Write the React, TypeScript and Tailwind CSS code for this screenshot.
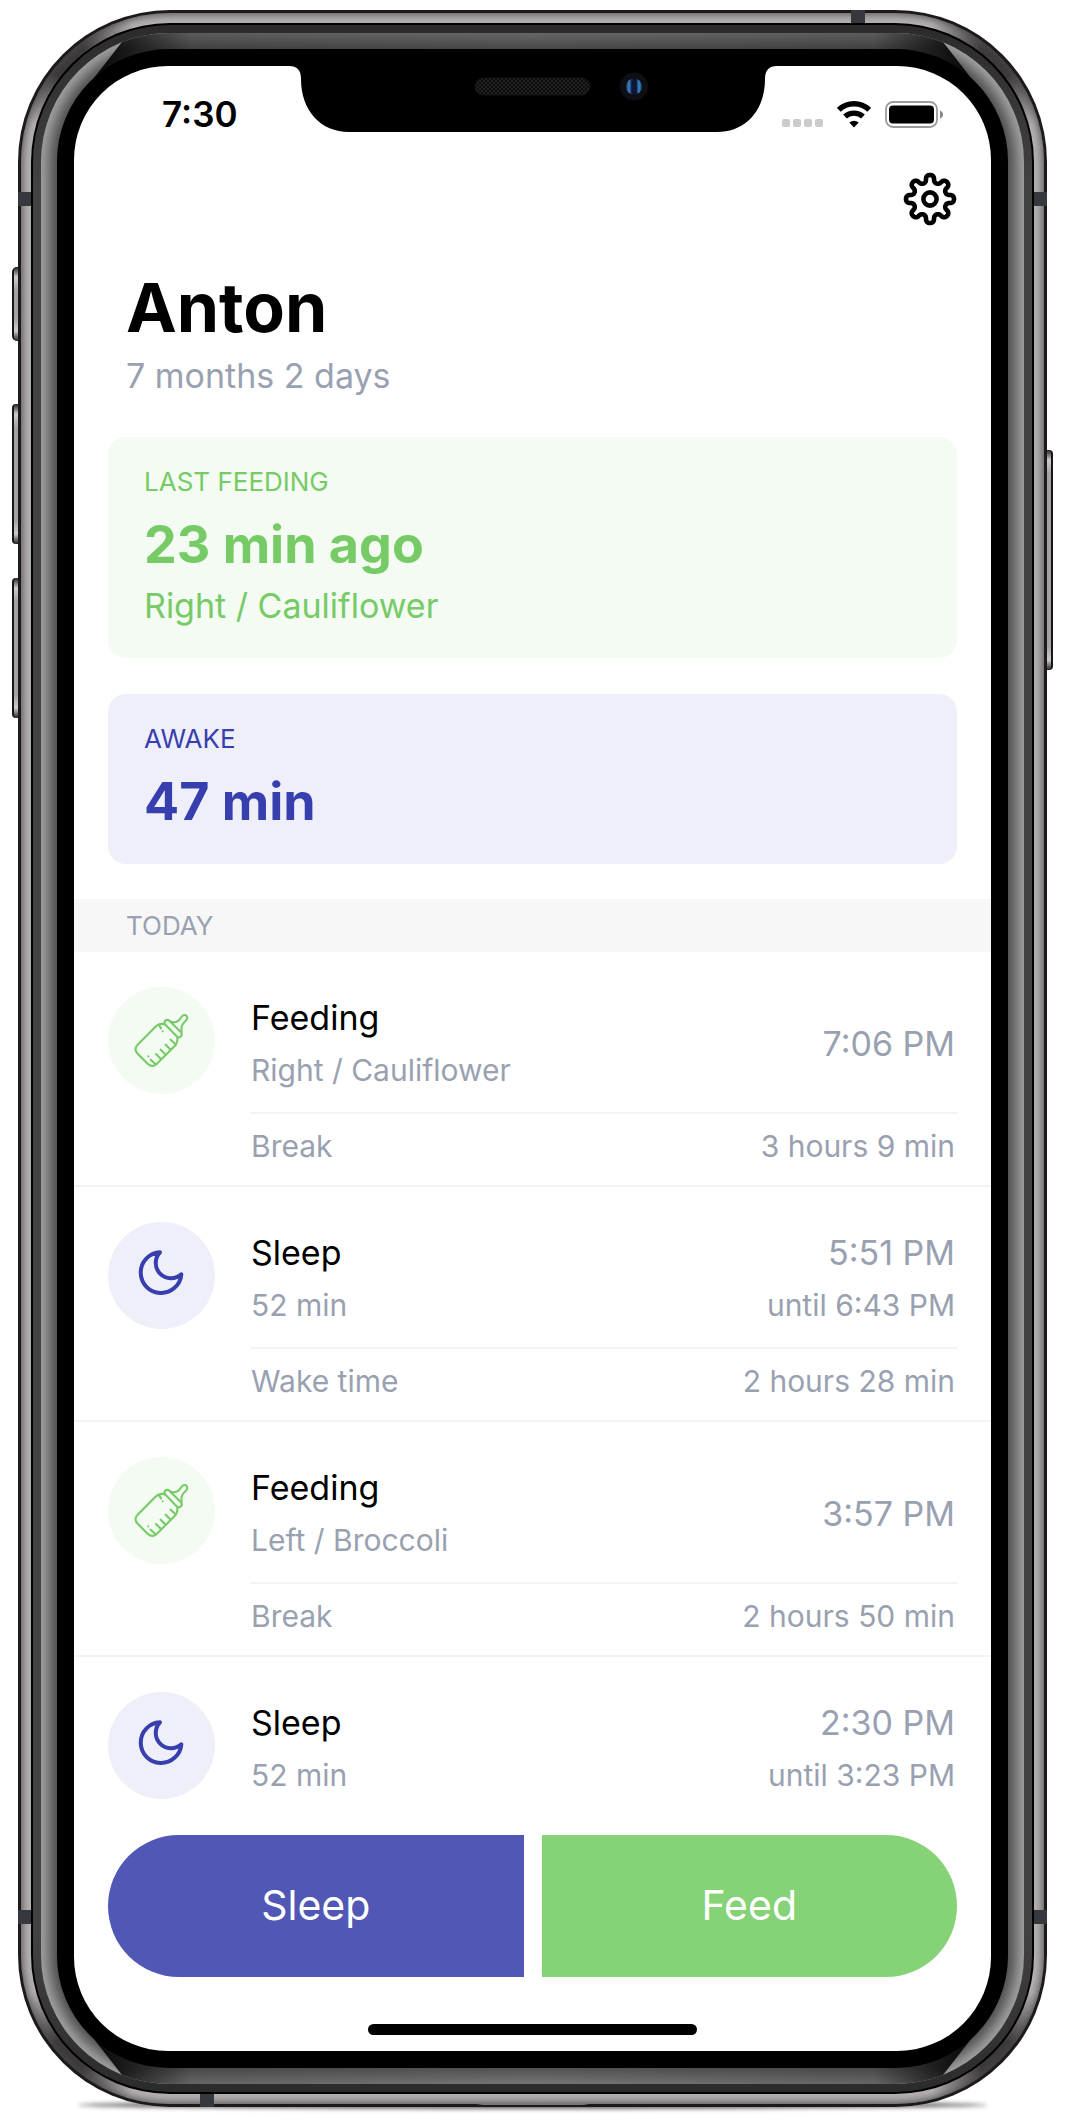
import type { ReactNode } from "react";

type Tone = "feed" | "sleep";

interface Entry {
  tone: Tone;
  title: string;
  detail: string;
  time: string;
  until?: string;
  gapLabel?: string;
  gapValue?: string;
}

const entries: Entry[] = [
  { tone: "feed", title: "Feeding", detail: "Right / Cauliflower", time: "7:06 PM", gapLabel: "Break", gapValue: "3 hours 9 min" },
  { tone: "sleep", title: "Sleep", detail: "52 min", time: "5:51 PM", until: "until 6:43 PM", gapLabel: "Wake time", gapValue: "2 hours 28 min" },
  { tone: "feed", title: "Feeding", detail: "Left / Broccoli", time: "3:57 PM", gapLabel: "Break", gapValue: "2 hours 50 min" },
  { tone: "sleep", title: "Sleep", detail: "52 min", time: "2:30 PM", until: "until 3:23 PM" },
];

/* Eight rounded teeth traced around a circle. */
function gearOutline(): string {
  const steps = 320;
  const points: string[] = [];
  for (let i = 0; i < steps; i++) {
    const t = (i / steps) * Math.PI * 2;
    const radius = 20.4 + 3.6 * Math.cos(8 * t);
    const angle = t + 0.04 * Math.sin(16 * t);
    points.push(`${(27 + radius * Math.sin(angle)).toFixed(2)} ${(27 - radius * Math.cos(angle)).toFixed(2)}`);
  }
  return `M${points.join("L")}Z`;
}

function GearIcon() {
  return (
    <svg viewBox="0 0 54 54" className="size-[54px]" fill="none" stroke="currentColor" strokeWidth="4.6" strokeLinejoin="round" aria-hidden="true">
      <path d={gearOutline()} />
      <circle cx="27" cy="27" r="6.6" />
    </svg>
  );
}

function BottleIcon() {
  return (
    <svg viewBox="30 37 168 168" className="size-14" fill="none" stroke="currentColor" strokeWidth="6.2" strokeLinecap="round" strokeLinejoin="round" aria-hidden="true">
      <path d="M122 71C112 68 103 70 96 77L41 132Q28 146 41 159L71 189Q85 202 98 190L152 136Q162 126 160 111" />
      <path d="M123 71C118 62 127 54 136 60L171 95C178 103 168 113 160 109Z" />
      <path d="M140 63C153 67 164 62 170 52C175 43 183 40 188 46C192 52 188 59 182 64C173 71 171 80 173 93" />
      <path d="M80 177L95 191M96 160L111 175M110 147L125 162M125 132L140 147M140 117L156 132" />
      <path d="M106 75L111 83M116 92V92.1M73 167V167.1" />
    </svg>
  );
}

function MoonIcon() {
  return (
    <svg viewBox="102 144 168 168" className="size-14" fill="none" stroke="currentColor" strokeWidth="12" strokeLinejoin="round" aria-hidden="true">
      <path d="M180 157A46 46 0 0 0 244 223A61 61 0 1 1 180 157Z" />
    </svg>
  );
}

function StatusIcons() {
  return (
    <div className="flex items-center gap-[14px]">
      <div className="flex gap-[3px] pt-[18px]">
        {[0, 1, 2, 3].map((dot) => (
          <span key={dot} className="size-2 rounded-[2px] bg-[#cbcbcb]" />
        ))}
      </div>
      <svg viewBox="0 0 34 27" className="h-[27px] w-[34px]" fill="none" stroke="#000" strokeWidth="5.4" aria-label="Wi-Fi">
        <path d="M1.8 8.8A22 22 0 0 1 32.2 8.8" />
        <path d="M8 15.6A13.5 13.5 0 0 1 26 15.6" />
        <path d="M12.3 21.6A7.5 7.5 0 0 1 21.7 21.6L17 26.5Z" fill="#000" stroke="none" />
      </svg>
      <svg viewBox="0 0 60 27" className="h-[27px] w-[60px]" aria-label="Battery">
        <rect x="1" y="1" width="51" height="25" rx="7" fill="none" stroke="#9b9b9b" strokeWidth="1.8" />
        <rect x="4" y="4.500" width="45" height="18" rx="4" />
        <path d="M55 9.500Q58 10.500 58 13.500T55 17.500Z" fill="#8a8a8a" />
      </svg>
    </div>
  );
}

function Notch() {
  return (
    <svg viewBox="0 0 488 66" className="absolute top-0 left-1/2 h-[66px] w-[488px] -translate-x-1/2" aria-hidden="true">
      <defs>
        <pattern id="mesh" width="4" height="4" patternUnits="userSpaceOnUse">
          <rect width="4" height="4" fill="#0d0d0d" />
          <circle cx="1" cy="1" r="1" fill="#262626" />
          <circle cx="3" cy="3" r="1" fill="#262626" />
        </pattern>
        <linearGradient id="lens">
          <stop offset="0" stopColor="#15406b" />
          <stop offset="0.2" stopColor="#3d86c8" />
          <stop offset="0.36" stopColor="#101a38" />
          <stop offset="0.64" stopColor="#0c1430" />
          <stop offset="0.8" stopColor="#3d86c8" />
          <stop offset="1" stopColor="#15406b" />
        </linearGradient>
      </defs>
      <path d="M0 0C8 0 12 4 12 13C12 45 32 66 60 66H428C456 66 476 45 476 13C476 4 480 0 488 0Z" />
      <rect x="186" y="12" width="115" height="17" rx="8.500" fill="url(#mesh)" stroke="#151515" />
      <circle cx="345" cy="20.500" r="14" fill="#0e0f13" />
      <circle cx="345" cy="20.500" r="8" fill="url(#lens)" />
    </svg>
  );
}

function SummaryCard({ tone, label, value, note }: { tone: Tone; label: string; value: string; note?: string }) {
  return (
    <section
      className={`rounded-[18px] px-9 pt-[27px] pb-[30px] ${
        tone === "feed" ? "bg-[#f3fbf2] text-[#76cb66]" : "bg-[#efeff9] text-[#373eae]"
      }`}
    >
      <h2 className="text-[26px] leading-9 uppercase">{label}</h2>
      <p className="mt-[13px] text-[52px] leading-[64px] font-bold">{value}</p>
      {note && <p className="mt-[7px] text-[34px] leading-[44px]">{note}</p>}
    </section>
  );
}

function EntryRow({ entry }: { entry: Entry }) {
  const hasGap = Boolean(entry.gapLabel);
  return (
    <li className={`flex gap-9 px-[34px] pt-[35px] ${hasGap ? "border-b-2 border-[#f3f3f6] pb-[7px]" : ""}`}>
      <div
        className={`flex size-[107px] shrink-0 items-center justify-center rounded-full ${
          entry.tone === "feed" ? "bg-[#f3fbf2] text-[#76cb66]" : "bg-[#efeff9] text-[#373eae]"
        }`}
      >
        {entry.tone === "feed" ? <BottleIcon /> : <MoonIcon />}
      </div>
      <div className="min-w-0 flex-1 pt-1 text-[#99a1b1]">
        <div className="flex items-center justify-between">
          <div>
            <h3 className="text-[34px] leading-[53px] text-black">{entry.title}</h3>
            <p className="text-[30px] leading-[52px]">{entry.detail}</p>
          </div>
          <div className="pr-0.5 text-right">
            <p className="text-[34px] leading-[53px]">{entry.time}</p>
            {entry.until && <p className="text-[30px] leading-[52px]">{entry.until}</p>}
          </div>
        </div>
        {hasGap && (
          <div className="mt-4 flex justify-between border-t-2 border-[#f3f3f5] pr-0.5 text-[30px] leading-[64px]">
            <span>{entry.gapLabel}</span>
            <span>{entry.gapValue}</span>
          </div>
        )}
      </div>
    </li>
  );
}

/* Hardware keys stick out from the edges of the case. */
function CaseKeys() {
  const key = "absolute w-[9px] border-[#171717] bg-[linear-gradient(#222,#d0cccd_10px,#a5a1a2_24px,#a5a1a2_calc(100%_-_24px),#d0cccd_calc(100%_-_10px),#222)]";
  return (
    <div aria-hidden="true">
      <span className={`${key} top-[257px] -left-[6px] h-[74px] rounded-l-[5px] border-l-2`} />
      <span className={`${key} top-[394px] -left-[6px] h-[140px] rounded-l-[4px] border-l-2`} />
      <span className={`${key} top-[568px] -left-[6px] h-[140px] rounded-l-[4px] border-l-2`} />
      <span className={`${key} top-[440px] -right-[6px] h-[220px] rounded-r-[4px] border-r-2`} />
    </div>
  );
}

function AntennaLines() {
  return (
    <div aria-hidden="true">
      <span className="absolute top-[182px] left-0 h-[14px] w-[15px] bg-[#35383c]" />
      <span className="absolute top-[182px] right-0 h-[14px] w-[15px] bg-[#35383c]" />
      <span className="absolute bottom-[183px] left-0 h-[14px] w-[15px] bg-[#35383c]" />
      <span className="absolute right-0 bottom-[183px] h-[14px] w-[15px] bg-[#35383c]" />
      <span className="absolute top-0 right-[182px] h-[15px] w-[14px] bg-[#35383c]" />
      <span className="absolute bottom-0 left-[182px] h-[15px] w-[14px] bg-[#35383c]" />
    </div>
  );
}

function PhoneCase({ children }: { children: ReactNode }) {
  return (
    <div className="relative">
      <span className="absolute right-[60px] -bottom-[2px] left-[60px] h-[8px] rounded-[50%] bg-black/60 blur-[2px]" aria-hidden="true" />
      <CaseKeys />
      <div className="relative rounded-[152px] bg-[#1c1a1b] p-[3px]">
        <div className="rounded-[149px] bg-[radial-gradient(circle_at_44px_44px,#3d393b_20px,transparent_75px),radial-gradient(circle_at_calc(100%_-_44px)_44px,#3d393b_20px,transparent_75px),radial-gradient(circle_at_44px_calc(100%_-_44px),#3d393b_20px,transparent_75px),radial-gradient(circle_at_calc(100%_-_44px)_calc(100%_-_44px),#3d393b_20px,transparent_75px),linear-gradient(#b5b1b2,#b5b1b2)] p-[10px] shadow-[inset_0_0_8px_1px_#4c484a]">
          <AntennaLines />
          <div className="relative rounded-[139px] bg-black p-[2px]">
            <div className="rounded-[137px] bg-[linear-gradient(#2b2b2b,#424242_160px,#424242_calc(100%_-_160px),#2b2b2b)] p-[8px]">
              <div className="relative overflow-hidden rounded-[129px] bg-[#4a4a4a] p-[16px] shadow-[inset_0_0_14px_8px_#a6a6a6]">
                <span className="absolute inset-x-0 top-0 h-[54px] bg-[linear-gradient(transparent,rgb(0_0_0/0.3)_16px),linear-gradient(to_right,#050505_50px,#5c5c5c_150px,#666_50%,#5c5c5c_calc(100%_-_150px),#050505_calc(100%_-_50px))] [clip-path:polygon(88px_0,46px_54px,calc(100%_-_46px)_54px,calc(100%_-_88px)_0)]" aria-hidden="true" />
                <span className="absolute inset-x-0 bottom-0 h-[54px] bg-[linear-gradient(to_top,transparent,rgb(0_0_0/0.3)_16px),linear-gradient(to_right,#050505_50px,#666_150px,#757575_50%,#666_calc(100%_-_150px),#050505_calc(100%_-_50px))] [clip-path:polygon(46px_0,88px_54px,calc(100%_-_88px)_54px,calc(100%_-_46px)_0)]" aria-hidden="true" />
                <div className="relative rounded-[112px] bg-black p-[17px]">{children}</div>
              </div>
            </div>
          </div>
        </div>
        <span className="absolute bottom-0 left-1/2 h-1 w-[112px] -translate-x-1/2 rounded-t-[50%] border-t-2 border-[#777]" aria-hidden="true" />
      </div>
    </div>
  );
}

export default function App() {
  return (
    <div className="overflow-hidden bg-white pt-[10px] pr-[19px] pb-[9px] pl-[18px] font-['Inter',sans-serif]">
      <PhoneCase>
        <main className="relative overflow-hidden rounded-[94px] bg-white pb-4 text-black">
          <Notch />
          <div className="flex h-24 items-center justify-between pr-[46px] pl-[88px]">
            <time className="text-[35px] leading-none font-semibold">7:30</time>
            <StatusIcons />
          </div>

          <div className="flex justify-end px-[34px] pt-[10px]">
            <button type="button" aria-label="Settings" className="rounded-full">
              <GearIcon />
            </button>
          </div>

          <header className="mt-[46px] px-[52px]">
            <h1 className="text-[68px] leading-[70px] font-bold">Anton</h1>
            <p className="mt-[10px] text-[34px] leading-[48px] text-[#99a1b1]">7 months 2 days</p>
          </header>

          <div className="mt-[37px] flex flex-col gap-9 px-[34px]">
            <SummaryCard tone="feed" label="Last feeding" value="23 min ago" note="Right / Cauliflower" />
            <SummaryCard tone="sleep" label="Awake" value="47 min" />
          </div>

          <h2 className="mt-[35px] bg-[#f7f7f7] px-[52px] text-[26px] leading-[53px] text-[#99a1b1] uppercase">Today</h2>
          <ul>
            {entries.map((entry) => (
              <EntryRow key={entry.time} entry={entry} />
            ))}
          </ul>

          <div className="mt-[34px] grid grid-cols-2 gap-[18px] px-[34px]">
            <button type="button" className="h-[142px] rounded-l-full bg-[#5157b5] text-[41px] text-white">
              Sleep
            </button>
            <button type="button" className="h-[142px] rounded-r-full bg-[#86d277] text-[41px] text-white">
              Feed
            </button>
          </div>
          <div className="mx-auto mt-[47px] h-[11px] w-[329px] rounded-full bg-black" />
        </main>
      </PhoneCase>
    </div>
  );
}
